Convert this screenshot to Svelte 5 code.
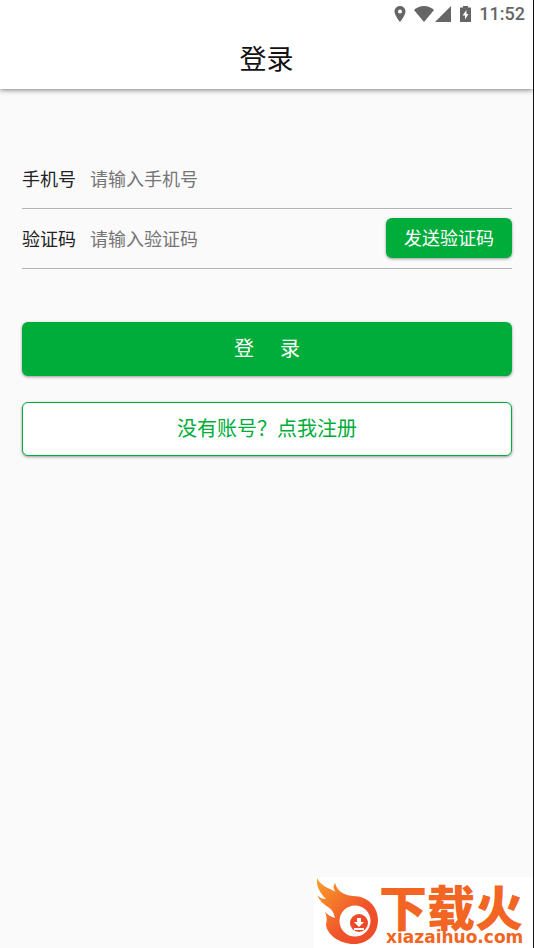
<script>
    let phone = $state('')
    let code = $state('')
</script>

<div class="screen">
    <header>
        <div class="status">
            <svg class="pin" width="12" height="16" viewBox="0 0 12 16" aria-hidden="true">
                <path fill-rule="evenodd" d="M6 0C2.9 0 .5 2.4 .5 5.500C.5 9.500 6 16 6 16S11.500 9.500 11.500 5.500C11.500 2.400 9.100 0 6 0ZM6 3.500A2 2 0 1 1 6 7.500A2 2 0 1 1 6 3.500Z" />
            </svg>
            <svg class="wifi" width="20" height="16" viewBox="0 0 20 16" aria-hidden="true">
                <path d="M0 4C6 -1.300 14 -1.300 20 4L10 16Z" />
            </svg>
            <svg class="signal" width="16" height="16" viewBox="0 0 16 16" aria-hidden="true">
                <path d="M16 0V16H0Z" />
            </svg>
            <svg class="battery" width="11" height="16" viewBox="0 0 11 16" aria-hidden="true">
                <path fill-rule="evenodd" d="M3 0H8V1.500H11V16H0V1.500H3ZM6.500 4L2.500 9.500H5V13.500L8.500 8H6.500Z" />
            </svg>
            <span>11:52</span>
        </div>
        <h1>登录</h1>
    </header>

    <form onsubmit={(e) => e.preventDefault()}>
        <div class="field">
            <label for="phone">手机号</label>
            <input id="phone" type="tel" placeholder="请输入手机号" bind:value={phone} />
        </div>
        <div class="field">
            <label for="code">验证码</label>
            <input id="code" type="text" placeholder="请输入验证码" bind:value={code} />
            <button class="send" type="button">发送验证码</button>
        </div>
        <button class="wide login" type="submit"><span>登</span><span>录</span></button>
        <button class="wide register" type="button">没有账号？点我注册</button>
    </form>

    <div class="watermark">
        <svg width="219" height="71" viewBox="0 0 219 71">
            <defs>
                <linearGradient id="fire" x1="0" y1="0" x2="1" y2="1">
                    <stop offset="0" stop-color="#f9a02c" />
                    <stop offset=".6" stop-color="#f0542a" />
                    <stop offset="1" stop-color="#ee4a27" />
                </linearGradient>
            </defs>
            <path fill="url(#fire)" d="M3 1C6 8 14 11 22 15C19 12 19 9 21 6C23 13 28 18 39 19C54 19 64 30 64 43C64 57 54 67 40 67C25 67 13 57 12 48C13 43 13 39 11 35C14 38 17 40 21 41C20 37 19 33 14 30C9 27 5 23 3 18C6 21 9 22 12 22C5 15 2 8 3 1Z" />
            <circle cx="41" cy="44" r="15.500" fill="#fff" />
            <circle cx="45" cy="46" r="9" fill="#ee4a27" />
            <path fill="#fff" d="M43 41H47V45H50L45 50L40 45H43ZM40 51H50V53H40Z" />
            <text class="brand" x="65" y="49">下载火</text>
            <text class="domain" x="72" y="66">xiazaihuo.com</text>
        </svg>
    </div>
</div>

<style>
    :global(body) {
        margin: 0;
        background: #fafafa;
    }
    .screen {
        box-sizing: border-box;
        position: relative;
        min-height: 100vh;
        border-right: 1px solid #111;
        background: #fafafa;
        font-family: "Noto Sans CJK SC", sans-serif;
    }
    header {
        background: #fff;
        box-shadow: 0 1px 5px rgba(0, 0, 0, .5);
    }
    .status {
        display: flex;
        align-items: center;
        justify-content: flex-end;
        height: 27px;
        padding-right: 8px;
        color: #666;
        font: 500 18px/28px Roboto, sans-serif;
    }
    .status svg {
        flex: none;
        fill: #666;
    }
    .pin {
        margin-right: 8px;
    }
    .wifi {
        margin-right: 1px;
    }
    .signal {
        margin-right: 9px;
    }
    .battery {
        margin-right: 8px;
    }
    h1 {
        margin: 0;
        color: #111;
        font-size: 27px;
        font-weight: 400;
        line-height: 62px;
        text-align: center;
    }
    form {
        padding: 60px 21px 0 22px;
    }
    .field {
        box-sizing: border-box;
        display: flex;
        align-items: center;
        height: 60px;
        padding-bottom: 2px;
        border-bottom: 1px solid #b4b4b4;
        font-size: 18px;
    }
    label {
        width: 68px;
        color: #222;
    }
    input {
        flex: 1;
        min-width: 0;
        padding: 0;
        border: 0;
        outline: 0;
        background: none;
        color: #222;
        font: inherit;
    }
    input::placeholder {
        color: #757575;
    }
    button {
        box-sizing: border-box;
        padding: 0 0 2px;
        border: 0;
        border-radius: 6px;
        background: #00ad3a;
        box-shadow: 0 1px 3px rgba(0, 0, 0, .4);
        color: #fff;
        font-family: inherit;
    }
    .send {
        width: 126px;
        height: 40px;
        font-size: 18px;
    }
    .wide {
        display: flex;
        align-items: center;
        justify-content: center;
        width: 100%;
        height: 54px;
        padding-bottom: 4px;
        font-size: 20px;
    }
    .login {
        gap: 26px;
        margin-top: 53px;
    }
    .register {
        margin-top: 26px;
        border: 1px solid #00ad3a;
        background: #fff;
        color: #00ad3a;
    }
    .watermark {
        position: absolute;
        right: 0;
        bottom: 0;
        background: #fff;
    }
    .watermark svg {
        display: block;
        overflow: visible;
    }
    .brand {
        fill: #f26522;
        font-size: 48px;
        font-weight: 900;
    }
    .domain {
        fill: #f26522;
        font-family: "DejaVu Sans", sans-serif;
        font-size: 17px;
        font-weight: 700;
    }
</style>
